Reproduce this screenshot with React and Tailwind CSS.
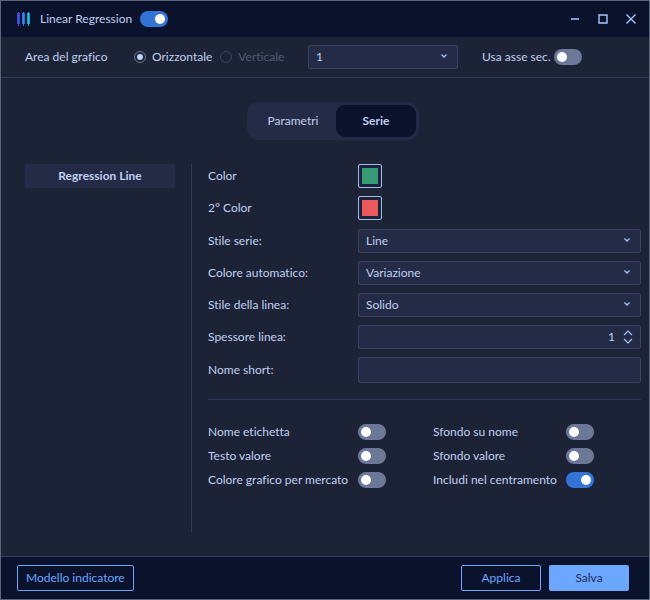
import { useState } from 'react';

const Chevron = () => (
    <svg viewBox="0 0 8 6" className="w-2 h-1.5 shrink-0 pointer-events-none" fill="none" stroke="#a4c0fb" strokeWidth="1.3">
        <path d="M1.5 1.5 L4 4 L6.5 1.5" />
    </svg>
);

const Toggle = ({ id, label, defaultChecked = false }) => (
    <input
        id={id}
        type="checkbox"
        role="switch"
        aria-label={label}
        defaultChecked={defaultChecked}
        className="appearance-none flex items-center w-7 h-4 px-[3px] rounded-full bg-[#6b7898] checked:bg-[#3474d6] checked:justify-end cursor-pointer shrink-0 before:block before:w-2.5 before:h-2.5 before:rounded-full before:bg-white"
    />
);

const Select = ({ id, label, options }) => (
    <div className="grid w-full items-center">
        <select
            id={id}
            aria-label={label}
            className="col-start-1 row-start-1 w-full h-6 px-[7px] appearance-none rounded-xs border border-[#3b4363] bg-[#242b47] outline-none"
        >
            {options.map((option) => (
                <option key={option}>{option}</option>
            ))}
        </select>
        <div className="col-start-1 row-start-1 justify-self-end pr-2.5 pb-0.5 pointer-events-none">
            <Chevron />
        </div>
    </div>
);

const Row = ({ id, label, children }) => (
    <div className="flex items-center">
        <label htmlFor={id} className="w-[150px] shrink-0">{label}</label>
        {children}
    </div>
);

const Swatch = ({ id, children }) => (
    <button id={id} type="button" className="w-6 h-6 p-[3px] rounded-xs border border-[#9dbbf8]">
        {children}
    </button>
);

const Radio = ({ label, ...props }) => (
    <label className="flex items-center gap-1.5 has-disabled:text-[#545c74]">
        <input
            type="radio"
            name="orientation"
            className="appearance-none flex items-center justify-center w-3 h-3 rounded-full border border-[#737b8c] disabled:border-[#3d4355] before:w-1.5 before:h-1.5 before:rounded-full checked:before:bg-[#bdd3ff]"
            {...props}
        />
        {label}
    </label>
);

const ToggleRow = ({ id, label, wide, on }) => (
    <div className="flex items-center">
        <label htmlFor={id} className={`shrink-0 whitespace-nowrap ${wide ? 'w-[150px]' : 'w-[133px]'}`}>{label}</label>
        <Toggle id={id} label={label} defaultChecked={on} />
    </div>
);

const App = () => {
    const [tab, setTab] = useState('Serie');
    const [thickness, setThickness] = useState(1);

    return (
        <div className="min-h-screen flex flex-col border border-[#5a6679] bg-[#1d2337] text-[#c0d0f0] text-xs font-[Lato,sans-serif] [font-variant-ligatures:none]">
            {/* Title bar */}
            <header className="flex items-center h-9 pl-4 pr-1 bg-[#0a122c]">
                <svg viewBox="0 0 13 14" className="w-[13px] h-3.5 mr-2.5" fill="none">
                    <path d="M1.5 0V14" stroke="#3f4fd8" />
                    <path d="M1.5 1V12" stroke="#4658f0" strokeWidth="2.6" />
                    <path d="M6.5 0V14" stroke="#2a7ce0" />
                    <path d="M6.5 1V12" stroke="#2f8cf8" strokeWidth="2.6" />
                    <path d="M11.5 0V14" stroke="#10a4d8" />
                    <path d="M11.5 1V12" stroke="#18c0f4" strokeWidth="2.6" />
                </svg>
                <h1 className="mr-2">Linear Regression</h1>
                <Toggle label="Linear Regression" defaultChecked />
                <div className="flex ml-auto">
                    <button type="button" aria-label="Minimize" className="w-7 h-7 flex items-center justify-center">
                        <svg viewBox="0 0 12 12" className="w-3 h-3" stroke="#7f9bd8" strokeWidth="2">
                            <path d="M2 6H10" />
                        </svg>
                    </button>
                    <button type="button" aria-label="Maximize" className="w-7 h-7 flex items-center justify-center">
                        <svg viewBox="0 0 12 12" className="w-3 h-3" fill="none" stroke="#a9c5ff" strokeWidth="1.4">
                            <path d="M2 2H10V10H2Z" />
                        </svg>
                    </button>
                    <button type="button" aria-label="Close" className="w-7 h-7 flex items-center justify-center">
                        <svg viewBox="0 0 12 12" className="w-3 h-3" stroke="#a9c5ff" strokeWidth="1.4">
                            <path d="M1.5 1.5L10.5 10.5M10.5 1.5L1.5 10.5" />
                        </svg>
                    </button>
                </div>
            </header>

            {/* Chart area */}
            <div className="flex items-center h-[41px] pl-6 border-b border-[#343c5a]">
                <span className="w-[109px] shrink-0">Area del grafico</span>
                <div className="flex gap-2 w-[174px] shrink-0">
                    <Radio label="Orizzontale" defaultChecked />
                    <Radio label="Verticale" disabled />
                </div>
                <div className="w-[150px] mr-6">
                    <Select label="Area del grafico" options={['1', '2', '3']} />
                </div>
                <label htmlFor="secondary-axis" className="w-[72px] shrink-0 whitespace-nowrap">Usa asse sec.</label>
                <Toggle id="secondary-axis" label="Usa asse sec." />
            </div>

            <main className="flex-1 flex flex-col pt-6 pb-6 pl-6 pr-2">
                {/* Tabs */}
                <div role="tablist" className="flex self-center h-[38px] p-[3px] rounded-xl bg-[#242b47]">
                    {['Parametri', 'Serie'].map((name) => (
                        <button
                            key={name}
                            type="button"
                            role="tab"
                            aria-selected={tab === name}
                            onClick={() => setTab(name)}
                            className={`rounded-[9px] ${tab === name ? 'w-20 bg-[#0a122c] font-bold' : 'w-[86px]'}`}
                        >
                            {name}
                        </button>
                    ))}
                </div>

                <div className="flex-1 flex mt-6">
                    <nav className="w-[167px] pr-4 shrink-0 border-r border-[#343c5a]">
                        <button type="button" className="w-full h-6 rounded-xs bg-[#242b47] font-bold">Regression Line</button>
                    </nav>

                    <form className="flex-1 pl-4" onSubmit={(e) => e.preventDefault()}>
                        <div className="flex flex-col gap-[9px]">
                            <div className="flex flex-col gap-2">
                                <Row id="color" label="Color">
                                    <Swatch id="color"><span className="block h-full bg-[#369b74]" /></Swatch>
                                </Row>
                                <Row id="color-2" label="2° Color">
                                    <Swatch id="color-2"><span className="block h-full bg-[#ea5a5c]" /></Swatch>
                                </Row>
                            </div>
                            <div className="flex flex-col gap-2">
                                <Row id="series-style" label="Stile serie:">
                                    <Select id="series-style" options={['Line']} />
                                </Row>
                                <Row id="auto-color" label="Colore automatico:">
                                    <Select id="auto-color" options={['Variazione']} />
                                </Row>
                                <Row id="line-style" label="Stile della linea:">
                                    <Select id="line-style" options={['Solido']} />
                                </Row>
                                <Row id="thickness" label="Spessore linea:">
                                    <div className="flex flex-1 items-center h-6 pr-[7px] rounded-xs border border-[#3b4363] bg-[#242b47]">
                                        <input
                                            id="thickness"
                                            type="text"
                                            inputMode="numeric"
                                            value={thickness}
                                            onChange={(e) => setThickness(Number(e.target.value) || 1)}
                                            className="flex-1 min-w-0 mr-2 bg-transparent text-right outline-none"
                                        />
                                        <div className="flex flex-col gap-0.5">
                                            <button type="button" aria-label="Aumenta" className="block" onClick={() => setThickness(thickness + 1)}>
                                                <svg viewBox="0 0 10 6" className="w-2.5 h-1.5" fill="none" stroke="#a4c0fb" strokeWidth="1.2">
                                                    <path d="M1 5L5 1L9 5" />
                                                </svg>
                                            </button>
                                            <button type="button" aria-label="Diminuisci" className="block" onClick={() => setThickness(Math.max(1, thickness - 1))}>
                                                <svg viewBox="0 0 10 6" className="w-2.5 h-1.5" fill="none" stroke="#a4c0fb" strokeWidth="1.2">
                                                    <path d="M1 1L5 5L9 1" />
                                                </svg>
                                            </button>
                                        </div>
                                    </div>
                                </Row>
                                <Row id="short-name" label="Nome short:">
                                    <input id="short-name" type="text" className="flex-1 min-w-0 h-[26px] px-2 rounded-xs border border-[#3b4363] bg-[#242b47] outline-none" />
                                </Row>
                            </div>
                        </div>

                        <hr className="my-4 border-[#2f3753]" />

                        <div className="flex gap-[47px] pt-2">
                            <div className="flex flex-col gap-2">
                                <ToggleRow id="label-name" label="Nome etichetta" wide />
                                <ToggleRow id="value-text" label="Testo valore" wide />
                                <ToggleRow id="market-color" label="Colore grafico per mercato" wide />
                            </div>
                            <div className="flex flex-col gap-2">
                                <ToggleRow id="name-bg" label="Sfondo su nome" />
                                <ToggleRow id="value-bg" label="Sfondo valore" />
                                <ToggleRow id="centering" label="Includi nel centramento" on />
                            </div>
                        </div>
                    </form>
                </div>
            </main>

            <footer className="flex items-center gap-2 py-2 pl-4 pr-5 border-t border-[#343c5a] bg-[#0a122c]">
                <button type="button" className="h-[26px] px-2 mr-auto rounded-xs border border-[#6ba6ff] text-[#6ba6ff]">Modello indicatore</button>
                <button type="button" className="w-20 h-[26px] rounded-xs border border-[#6ba6ff] text-[#6ba6ff]">Applica</button>
                <button type="button" className="w-20 h-[26px] rounded-xs bg-[#6ba6ff] text-[#1d2f57]">Salva</button>
            </footer>
        </div>
    );
};

export default App;
